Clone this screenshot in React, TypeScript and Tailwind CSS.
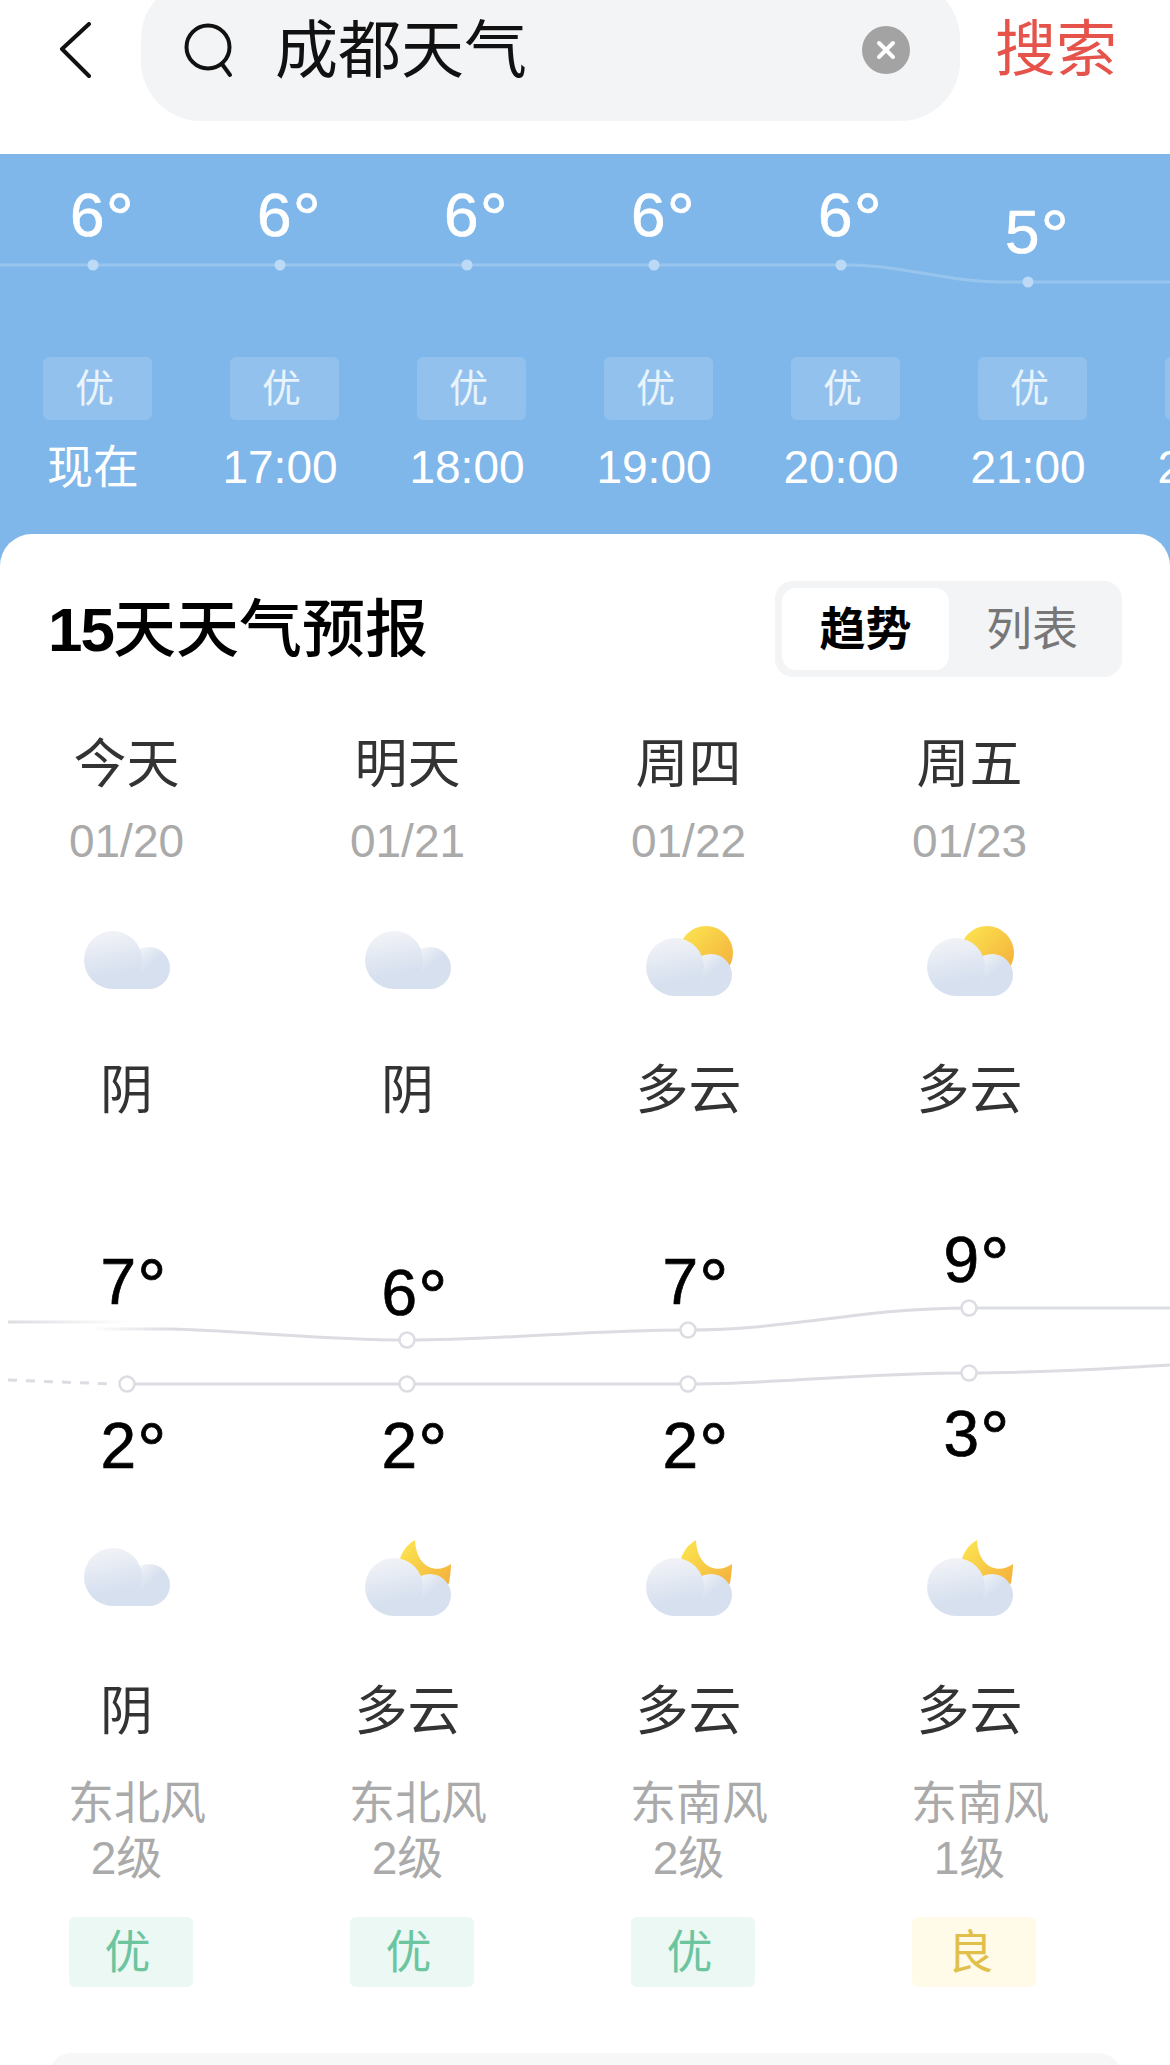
const hours = [
  { temp: "6", pad: "pt-[29px]", label: "现在" },
  { temp: "6", pad: "pt-[29px]", label: "17:00" },
  { temp: "6", pad: "pt-[29px]", label: "18:00" },
  { temp: "6", pad: "pt-[29px]", label: "19:00" },
  { temp: "6", pad: "pt-[29px]", label: "20:00" },
  { temp: "5", pad: "pt-[46px]", label: "21:00" },
  { temp: "", pad: "pt-[46px]", label: "22:00" },
]

const days = [
  { name: "今天", date: "01/20", dayIcon: "cloud", dayText: "阴", hi: "7", hiPad: "pt-[29px]", lo: "2", loPad: "pt-[63px]", nightIcon: "cloud", nightText: "阴", wind: "东北风", level: "2级", air: "优", good: true },
  { name: "明天", date: "01/21", dayIcon: "cloud", dayText: "阴", hi: "6", hiPad: "pt-[40px]", lo: "2", loPad: "pt-[63px]", nightIcon: "moon", nightText: "多云", wind: "东北风", level: "2级", air: "优", good: true },
  { name: "周四", date: "01/22", dayIcon: "sun", dayText: "多云", hi: "7", hiPad: "pt-[29px]", lo: "2", loPad: "pt-[63px]", nightIcon: "moon", nightText: "多云", wind: "东南风", level: "2级", air: "优", good: true },
  { name: "周五", date: "01/23", dayIcon: "sun", dayText: "多云", hi: "9", hiPad: "pt-[7px]", lo: "3", loPad: "pt-[51px]", nightIcon: "moon", nightText: "多云", wind: "东南风", level: "1级", air: "良", good: false },
]

function Temp({ value }: { value: string }) {
  if (!value) return null
  return (
    <>
      {value}
      <span className="ml-[1px] align-[-0.1em] text-[1.15em] leading-none">°</span>
    </>
  )
}

function WeatherIcon({ kind, id }: { kind: string; id: string }) {
  // cloud sits lower under the moon, a bit less under the sun
  const shift = kind === "cloud" ? 0 : kind === "sun" ? 7 : 10
  const bigY = 42 + shift
  const smallY = 50 + shift
  const bottom = 71 + shift
  return (
    <svg width="100" height="85" viewBox="0 0 100 85">
      <defs>
        <linearGradient id={`${id}-big`} x1="0.35" y1="0" x2="0.5" y2="0.75">
          <stop offset="0" stopColor="#f2f3f7" />
          <stop offset="1" stopColor="#d6e0ef" />
        </linearGradient>
        <linearGradient id={`${id}-small`} x1="0.1" y1="0.2" x2="0.55" y2="0.7">
          <stop offset="0" stopColor="#f1f3f7" />
          <stop offset="0.7" stopColor="#d6e0ef" />
        </linearGradient>
        <linearGradient id={`${id}-sun`} x1="0.1" y1="0.1" x2="0.9" y2="0.9">
          <stop offset="0" stopColor="#fbe24f" />
          <stop offset="1" stopColor="#f4b03c" />
        </linearGradient>
      </defs>
      {kind === "sun" && <circle cx="69" cy="35" r="27" fill={`url(#${id}-sun)`} />}
      {kind === "moon" && (
        <path
          d="M59 5 C42 15 38 35 50 52 C62 62 86 62 93 48 C94 42 95 35 95 29 C80 40 60 32 59 5 Z"
          fill={`url(#${id}-sun)`}
        />
      )}
      <circle cx="74" cy={smallY} r="21" fill={`url(#${id}-small)`} />
      <rect x="38" y={bottom - 10} width="36" height="10" fill="#d6e0ef" />
      <circle cx="38" cy={bigY} r="29" fill={`url(#${id}-big)`} />
    </svg>
  )
}

export default function App() {
  return (
    <div className="h-[2065px] w-[1170px] overflow-hidden bg-white font-['Liberation_Sans','Noto_Sans_CJK_SC',sans-serif]">
      {/* search bar, cut by the top of the screen */}
      <header className="flex h-[154px] flex-col">
        <div className="-mt-[21px] flex h-[142px] shrink-0 items-center">
          <svg className="ml-[58px] shrink-0" width="34" height="56" viewBox="0 0 34 56" fill="none" stroke="#111" strokeWidth="4" strokeLinecap="round" strokeLinejoin="round">
            <path d="M31 2 L4 27 L31 54" />
          </svg>
          <div className="ml-[49px] flex h-full w-[819px] items-center rounded-[60px] bg-[#f3f4f6] pl-[39px]">
            <svg className="shrink-0" width="56" height="60" viewBox="0 0 56 60" fill="none" stroke="#111" strokeWidth="4" strokeLinecap="round">
              <circle cx="28" cy="27" r="21.5" />
              <path d="M42 44 L50 55" />
            </svg>
            <span className="ml-[39px] text-[63px] leading-none text-[#111]">成都天气</span>
            <div className="mr-[50px] ml-auto flex h-[48px] w-[48px] items-center justify-center rounded-full bg-[#a3a3a3]">
              <svg width="22" height="22" viewBox="0 0 22 22" stroke="#fff" strokeWidth="4" strokeLinecap="round">
                <path d="M4 4 L18 18 M18 4 L4 18" />
              </svg>
            </div>
          </div>
          <span className="ml-[35px] text-[61px] leading-none text-[#e5534b]">搜索</span>
        </div>
      </header>

      {/* hourly strip */}
      <section className="relative h-[420px] overflow-hidden bg-[#7fb7ea]">
        <svg className="absolute top-0 left-0" width="1170" height="200" viewBox="0 0 1170 200" fill="none">
          <path d="M0 111 H850 C900 111 950 128 1000 128 H1170" stroke="#fff" strokeOpacity="0.2" strokeWidth="3" />
          {[93, 280, 467, 654, 841].map((x) => (
            <circle key={x} cx={x} cy="111" r="5.5" fill="#bcd9f5" />
          ))}
          <circle cx="1028" cy="128" r="5.5" fill="#bcd9f5" />
        </svg>
        <div className="relative flex">
          {hours.map((h) => (
            <div key={h.label} className="flex w-[187px] shrink-0 flex-col">
              <div className={`h-[203px] pl-[70px] text-[62px] leading-none text-white [-webkit-text-stroke:0.7px_#fff] ${h.pad}`}>
                <Temp value={h.temp} />
              </div>
              <div className="ml-[43px] flex h-[63px] w-[109px] items-center justify-center rounded-md bg-white/15 pr-[6px] text-[39px] leading-none text-white/80">
                优
              </div>
              <div className="mt-[24px] w-[186px] text-center text-[46px] leading-none text-white">{h.label}</div>
            </div>
          ))}
        </div>
      </section>

      {/* 15 day forecast */}
      <main className="relative -mt-[40px] rounded-t-[32px] bg-white pt-[47px]">
        <div className="flex items-center justify-between px-[48px]">
          <h2 className="text-[63px] leading-none font-medium text-black">
            <span className="text-[62px] font-bold tracking-[-2px]">15</span>天天气预报
          </h2>
          <div className="flex h-[96px] w-[347px] rounded-[18px] bg-[#f3f4f6] p-[7px]">
            <div className="flex w-[167px] items-center justify-center rounded-[14px] bg-white text-[46px] font-bold text-black">趋势</div>
            <div className="flex flex-1 items-center justify-center text-[46px] text-[#777]">列表</div>
          </div>
        </div>

        <div className="-ml-[14px] grid grid-cols-[repeat(4,281px)] pt-[61px]">
          {days.map((d) => (
            <div key={d.date} className="flex flex-col items-center">
              <div className="text-[53px] leading-none text-[#333]">{d.name}</div>
              <div className="mt-[27px] text-[46px] leading-none text-[#aaa]">{d.date}</div>
              <div className="mt-[54px] pr-[4px]">
                <WeatherIcon kind={d.dayIcon} id={`day-${d.date.slice(3)}`} />
              </div>
              <div className="mt-[61px] text-[53px] leading-none text-[#333]">{d.dayText}</div>
            </div>
          ))}
        </div>

        {/* high and low curves */}
        <div className="relative mt-[103px] h-[270px]">
          <svg className="absolute top-0 left-0" width="1170" height="270" viewBox="0 0 1170 270" fill="none">
            <defs>
              <linearGradient id="fade-out" x1="8" y1="0" x2="130" y2="0" gradientUnits="userSpaceOnUse">
                <stop offset="0" stopColor="#dcdde2" />
                <stop offset="1" stopColor="#dcdde2" stopOpacity="0" />
              </linearGradient>
              <linearGradient id="fade-in" x1="90" y1="0" x2="170" y2="0" gradientUnits="userSpaceOnUse">
                <stop offset="0" stopColor="#dcdde2" stopOpacity="0" />
                <stop offset="1" stopColor="#dcdde2" />
              </linearGradient>
            </defs>
            <path d="M8 102 H130" stroke="url(#fade-out)" strokeWidth="3" />
            <path d="M90 109 H170" stroke="url(#fade-in)" strokeWidth="3" />
            <path
              d="M170 109 C250 111 320 120 407 120 C500 120 590 110 688 110 C790 110 860 88 969 88 H1170"
              stroke="#dcdde2"
              strokeWidth="3"
            />
            <path d="M8 160 L112 164" stroke="#dcdde2" strokeWidth="3" strokeDasharray="9 9" />
            <path d="M127 164 H688 C780 164 860 153 969 153 C1050 153 1110 148 1170 145" stroke="#dcdde2" strokeWidth="3" />
            {[
              [407, 120],
              [688, 110],
              [969, 88],
              [127, 164],
              [407, 164],
              [688, 164],
              [969, 153],
            ].map(([x, y]) => (
              <circle key={`${x}-${y}`} cx={x} cy={y} r="7.5" fill="#fff" stroke="#dcdde2" strokeWidth="2.5" />
            ))}
          </svg>
          <div className="relative -ml-[14px] grid grid-cols-[repeat(4,281px)]">
            {days.map((d) => (
              <div key={d.date} className="pl-[14px] text-center text-[64px] leading-none text-black [-webkit-text-stroke:0.7px_#000]">
                <div className={`h-[130px] ${d.hiPad}`}>
                  <Temp value={d.hi} />
                </div>
                <div className={`h-[140px] ${d.loPad}`}>
                  <Temp value={d.lo} />
                </div>
              </div>
            ))}
          </div>
        </div>

        <div className="-ml-[14px] grid grid-cols-[repeat(4,281px)] pt-[45px]">
          {days.map((d) => (
            <div key={d.date} className="flex flex-col items-center">
              <div className="pr-[4px]">
                <WeatherIcon kind={d.nightIcon} id={`night-${d.date.slice(3)}`} />
              </div>
              <div className="mt-[65px] text-[53px] leading-none text-[#333]">{d.nightText}</div>
              <div className="mt-[38px] text-center text-[46px] leading-[55px] text-[#aaa]">
                <div className="pl-[21px]">{d.wind}</div>
                <div>{d.level}</div>
              </div>
              <div
                className={`mt-[31px] ml-[8px] flex h-[70px] w-[124px] items-center justify-center rounded-md pr-[6px] text-[46px] leading-none ${
                  d.good ? "bg-[#ebf8f3] text-[#6cc59f]" : "bg-[#fffbe8] text-[#e0c04b]"
                }`}
              >
                {d.air}
              </div>
            </div>
          ))}
        </div>

        <div className="mx-[48px] mt-[66px] h-[40px] rounded-t-[24px] bg-[#f7f7f8]" />
      </main>
    </div>
  )
}
